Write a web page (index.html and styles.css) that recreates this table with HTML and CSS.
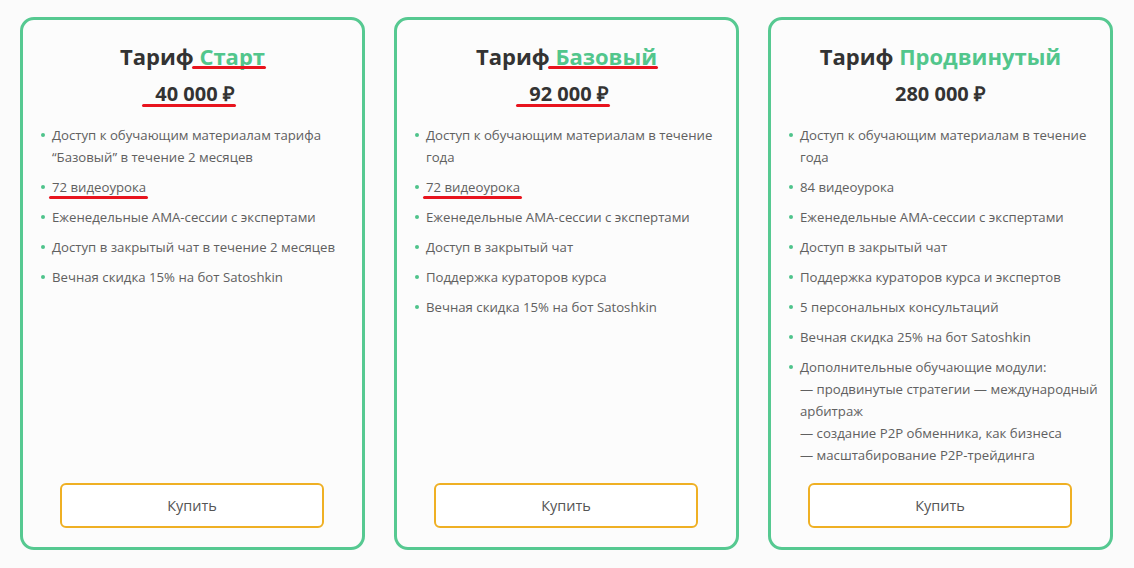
FILE: index.html
```html
<!DOCTYPE html>
<html lang="ru">
<head>
<meta charset="utf-8">
<link rel="stylesheet" href="styles.css">
</head>
<body>
<div class="plans">
  <div class="card">
    <h2 class="title">Тариф<span class="accent mark mark-title"> Старт</span></h2>
    <div class="price"><span class="mark mark-price">&nbsp;40 000 ₽</span></div>
    <ul class="features">
      <li>Доступ к обучающим материалам тарифа<br>“Базовый” в течение 2 месяцев</li>
      <li><span class="mark mark-item">72 видеоурока</span></li>
      <li>Еженедельные АМА-сессии с экспертами</li>
      <li>Доступ в закрытый чат в течение 2 месяцев</li>
      <li>Вечная скидка 15% на бот Satoshkin</li>
    </ul>
    <button class="buy">Купить</button>
  </div>
  <div class="card">
    <h2 class="title">Тариф<span class="accent mark mark-title"> Базовый</span></h2>
    <div class="price"><span class="mark mark-price">&nbsp;92 000 ₽</span></div>
    <ul class="features">
      <li>Доступ к обучающим материалам в течение<br>года</li>
      <li><span class="mark mark-item">72 видеоурока</span></li>
      <li>Еженедельные АМА-сессии с экспертами</li>
      <li>Доступ в закрытый чат</li>
      <li>Поддержка кураторов курса</li>
      <li>Вечная скидка 15% на бот Satoshkin</li>
    </ul>
    <button class="buy">Купить</button>
  </div>
  <div class="card">
    <h2 class="title">Тариф <span class="accent">Продвинутый</span></h2>
    <div class="price">280 000 ₽</div>
    <ul class="features">
      <li>Доступ к обучающим материалам в течение<br>года</li>
      <li>84 видеоурока</li>
      <li>Еженедельные АМА-сессии с экспертами</li>
      <li>Доступ в закрытый чат</li>
      <li>Поддержка кураторов курса и экспертов</li>
      <li>5 персональных консультаций</li>
      <li>Вечная скидка 25% на бот Satoshkin</li>
      <li>Дополнительные обучающие модули:<br>— продвинутые стратегии — международный<br>арбитраж<br>— создание P2P обменника, как бизнеса<br>— масштабирование P2P-трейдинга</li>
    </ul>
    <button class="buy">Купить</button>
  </div>
</div>
</body>
</html>
```
FILE: styles.css
```css
* { box-sizing: border-box; }
html, body {
  margin: 0;
  padding: 0;
  background: #fbfbfb;
}
body {
  font-family: "Open Sans", Lato, sans-serif;
  width: 1134px;
  height: 568px;
  overflow: hidden;
}
.plans {
  display: flex;
  gap: 29px;
  padding: 17px 0 0 20px;
}
.card {
  width: 345px;
  height: 533px;
  border: 3px solid #56c991;
  border-radius: 14px;
  background: #fcfcfc;
  display: flex;
  flex-direction: column;
  padding: 21px 8px 19px 29px;
}
.title {
  margin: 0 0 0 -21px;
  font-size: 22px;
  line-height: 30px;
  font-weight: 700;
  color: #333333;
  text-align: center;
}
.accent { color: #52c68c; }
.price {
  margin: 10px 0 0 -21px;
  font-size: 20px;
  line-height: 26px;
  font-weight: 700;
  color: #333333;
  text-align: center;
}
.mark { position: relative; }
.mark::after {
  content: "";
  position: absolute;
  left: -2px;
  right: -2px;
  height: 3px;
  background: #e8141e;
  border-radius: 2px;
}
.mark-title::after { bottom: 2px; left: -2px; right: -1px; }
.mark-price::after { bottom: 0; left: -8px; right: -1px; }
.mark-item::after { bottom: -3px; left: -3px; right: -2px; }
.features {
  list-style: none;
  margin: 17px 0 0;
  padding: 0;
  font-size: 13.2px;
  line-height: 22px;
  color: #606060;
}
.features li {
  position: relative;
  margin-bottom: 8px;
}
.features li::before {
  content: "";
  position: absolute;
  left: -11px;
  top: 9px;
  width: 4px;
  height: 4px;
  border-radius: 50%;
  background: #4fc38b;
}
.buy {
  margin: auto 0 0 8px;
  width: 264px;
  height: 45px;
  border: 2px solid #efb024;
  border-radius: 6px;
  background: #ffffff;
  font-family: inherit;
  font-size: 14.5px;
  color: #555555;
  cursor: pointer;
}
```
